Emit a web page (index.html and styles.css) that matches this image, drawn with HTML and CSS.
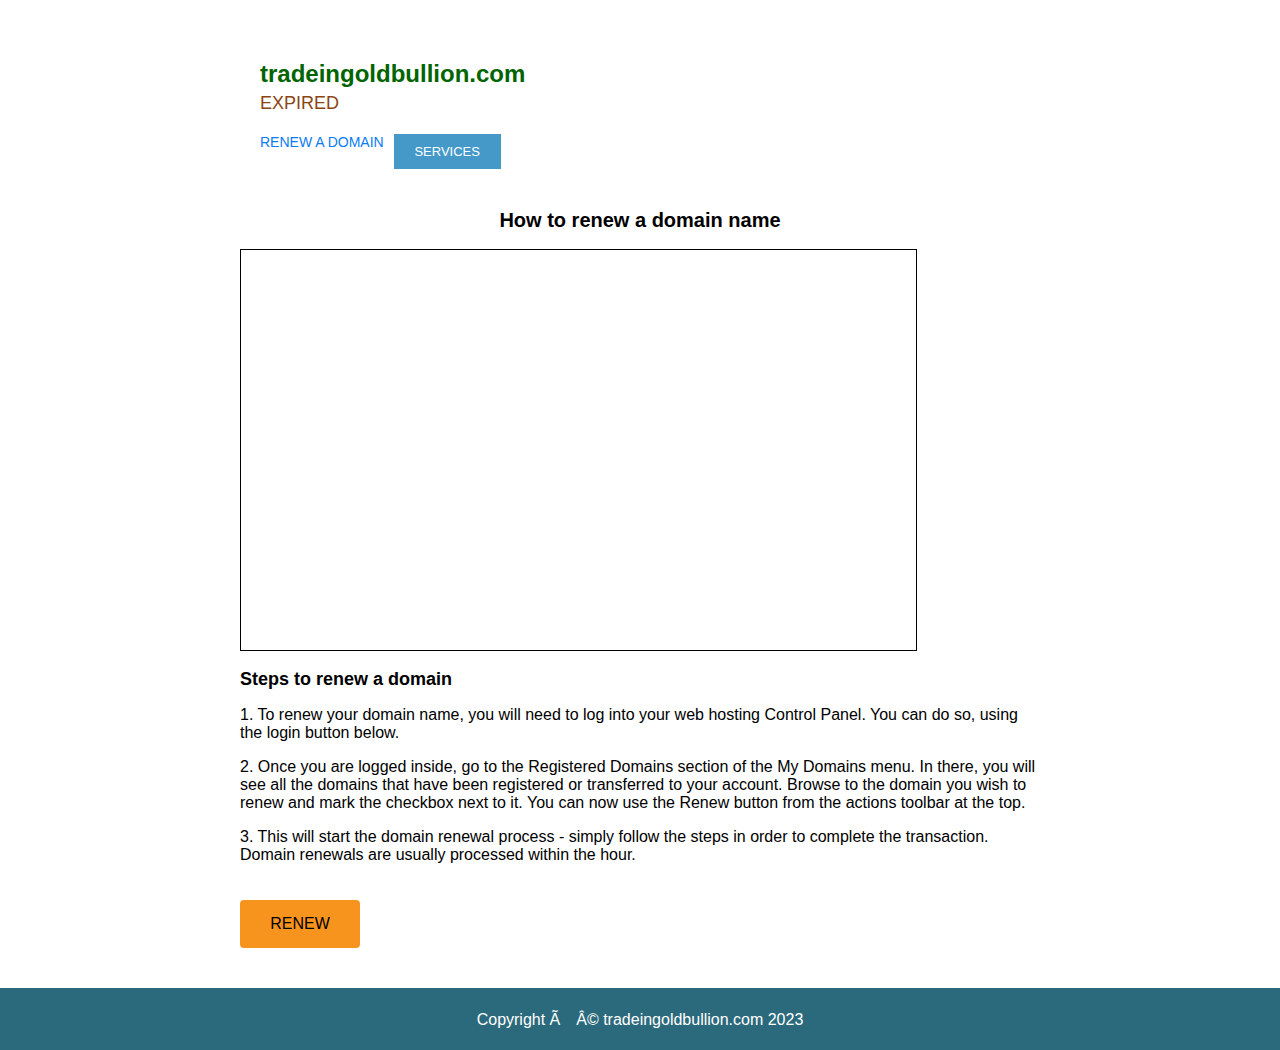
FILE: index.html
```html
<!DOCTYPE html>
<html>
<head>
<meta charset="utf-8">
<title>tradeingoldbullion.com</title>
<link rel="stylesheet" href="styles.css">
</head>
<body>
<div class="wrap">
  <header class="header">
    <h1 class="domain">tradeingoldbullion.com</h1>
    <div class="status">EXPIRED</div>
    <nav class="nav">
      <a class="nav-link" href="#">RENEW A DOMAIN</a>
      <a class="nav-btn" href="#">SERVICES</a>
    </nav>
  </header>
  <main class="main">
    <h2 class="title">How to renew a domain name</h2>
    <div class="video"></div>
    <h3 class="steps">Steps to renew a domain</h3>
    <p class="para">1. To renew your domain name, you will need to log into your web hosting Control Panel. You can do so, using the login button below.</p>
    <p class="para">2. Once you are logged inside, go to the Registered Domains section of the My Domains menu. In there, you will see all the domains that have been registered or transferred to your account. Browse to the domain you wish to renew and mark the checkbox next to it. You can now use the Renew button from the actions toolbar at the top.</p>
    <p class="para">3. This will start the domain renewal process - simply follow the steps in order to complete the transaction. Domain renewals are usually processed within the hour.</p>
    <a class="renew" href="#">RENEW</a>
  </main>
</div>
<footer class="footer">Copyright Ã&emsp;Â© tradeingoldbullion.com 2023</footer>
</body>
</html>
```

FILE: styles.css
```css
html, body {
  margin: 0;
  padding: 0;
  background: #fff;
  font-family: "Liberation Sans", Arial, sans-serif;
  color: #000;
}
.wrap {
  width: 800px;
  margin: 0 auto;
  padding-top: 40px;
  padding-bottom: 40px;
}
.header {
  padding: 20px 20px 0 20px;
}
.domain {
  margin: 0;
  font-size: 24px;
  line-height: 28px;
  font-weight: bold;
  color: #006400;
}
.status {
  margin-top: 4px;
  font-size: 18px;
  line-height: 22px;
  color: #8b4513;
}
.nav {
  display: flex;
  align-items: flex-start;
  gap: 10px;
  margin-top: 20px;
}
.nav-link {
  font-size: 14px;
  line-height: 16px;
  color: #0a7cf5;
  text-decoration: none;
}
.nav-btn {
  display: block;
  width: 107px;
  height: 35px;
  line-height: 35px;
  text-align: center;
  background: #4499c9;
  color: #fff;
  font-size: 13px;
  text-decoration: none;
}
.main {
  padding-top: 39px;
}
.title {
  margin: 0 0 17px 0;
  text-align: center;
  font-size: 20px;
  line-height: 24px;
  font-weight: bold;
}
.video {
  width: 675px;
  height: 400px;
  border: 1px solid #000;
}
.steps {
  margin: 18px 0 17px 0;
  font-size: 18px;
  line-height: 20px;
  font-weight: bold;
}
.para {
  margin: 0 0 16px 0;
  font-size: 16px;
  line-height: 18px;
}
.renew {
  display: block;
  width: 120px;
  height: 48px;
  line-height: 48px;
  margin-top: 36px;
  text-align: center;
  background: #f7941d;
  color: #000;
  border-radius: 4px;
  font-size: 16px;
  text-decoration: none;
}
.footer {
  background: #2b6a7c;
  color: #fff;
  height: 61px;
  padding-top: 1px;
  line-height: 61px;
  text-align: center;
  font-size: 16px;
}
```
